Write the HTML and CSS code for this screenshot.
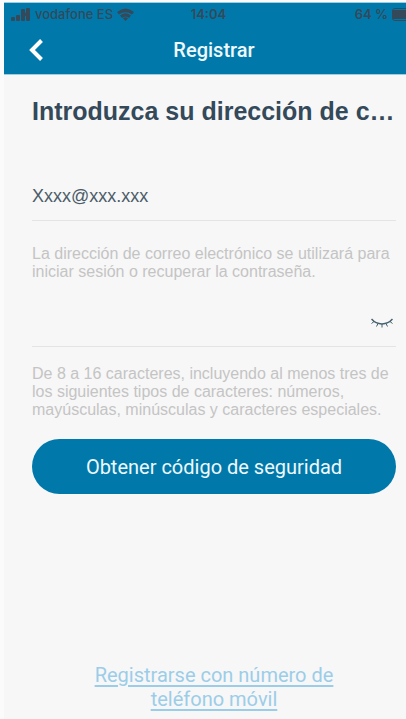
FILE: index.html
```html
<!DOCTYPE html>
<html lang="es">
<head>
<meta charset="utf-8">
<meta name="viewport" content="width=device-width, initial-scale=1">
<title>Registrar</title>
<link rel="stylesheet" href="styles.css">
</head>
<body>
<div class="screen">
  <header class="top">
    <div class="status">
      <div class="carrier">
        <svg class="signal" width="20" height="13" viewBox="0 0 20 13" aria-hidden="true"><rect x="0" y="9" width="4" height="4" rx="1"/><rect x="5" y="7" width="4" height="6" rx="1"/><rect x="10" y="1" width="4" height="12" rx="1"/><rect x="15" y="0" width="4" height="13" rx="1"/><path d="M12 3l6 8" stroke="#34495a" stroke-width="2"/></svg>
        <span>vodafone ES</span>
        <svg class="wifi" width="17" height="13" viewBox="0 0 17 13" aria-hidden="true"><path d="M0 4Q8.500-3 17 4L15 6.500Q8.500 2 2 6.500ZM3 7.500Q8.500 3 14 7.500L12 10Q8.500 7 5 10ZM6 10.500Q8.500 8 11 10.500L8.500 13Z"/></svg>
      </div>
      <span class="time">14:04</span>
      <div class="battery">
        <span>64 %</span>
        <svg width="14" height="13" viewBox="0 0 14 13" aria-hidden="true"><path d="M14 .5H3Q.5 .5 .5 3V10Q.5 12.500 3 12.500H14" fill="none" stroke="#34495a"/><rect x="1" y="2" width="13" height="9"/></svg>
      </div>
    </div>
    <nav class="bar">
      <button class="back" type="button" aria-label="Atrás"><svg width="16" height="24" viewBox="0 0 16 24" aria-hidden="true"><path d="M13.500 2.500L4 12L13.500 21.500" fill="none" stroke="#fff" stroke-width="4"/></svg></button>
      <span class="title">Registrar</span>
    </nav>
  </header>
  <main class="content">
    <h1>Introduzca su dirección de c…</h1>
    <form>
      <div class="field">
        <input type="email" value="Xxxx@xxx.xxx" aria-label="Correo electrónico" aria-describedby="mail-help">
      </div>
      <p class="help" id="mail-help">La dirección de correo electrónico se utilizará para iniciar sesión o recuperar la contraseña.</p>
      <div class="field">
        <input type="password" aria-label="Contraseña" aria-describedby="pass-help">
        <button class="eye" type="button" aria-label="Mostrar contraseña"><svg width="22" height="10" viewBox="0 0 22 10" fill="none" stroke="#45606f" aria-hidden="true"><path d="M.5 1C6 7.500 16 7.500 21.500 1" stroke-width="1.500"/><path d="M3 3.500L.5 5.500M7 5.500L5.500 8.500M11 6V9.500M15 5.500L16.500 8.500M19 3.500L21.500 5.500"/></svg></button>
      </div>
      <p class="help rules" id="pass-help">De 8 a 16 caracteres, incluyendo al menos tres de los siguientes tipos de caracteres: números, mayúsculas, minúsculas y caracteres especiales.</p>
      <button class="submit" type="submit">Obtener código de seguridad</button>
    </form>
    <a class="phone" href="#">Registrarse con número de teléfono móvil</a>
  </main>
</div>
</body>
</html>
```
FILE: styles.css
```css
* { box-sizing: border-box; }
body {
  margin: 0;
  background: #fbfbfb;
  color: #34495a;
  font-family: "Liberation Sans", Arial, sans-serif;
}
button { border: 0; padding: 0; background: none; cursor: pointer; }
svg { display: block; flex: none; }
.screen {
  display: flex;
  flex-direction: column;
  min-height: 100vh;
  padding: 2px 0 0 4px;
}
.top {
  background: #0079aa;
  border: 1px solid #9fcde0;
  border-width: 1px 0;
}
.status {
  display: grid;
  grid-template-columns: 1fr auto 1fr;
  align-items: center;
  height: 22px;
  padding-left: 7px;
  font-size: 13px;
  font-family: Inter, sans-serif;
  font-weight: 600;
}
.status svg { fill: #34495a; }
.carrier, .battery { display: flex; align-items: center; gap: 4px; }
.carrier { font-weight: 500; }
.battery { justify-content: flex-end; }
.bar {
  display: grid;
  grid-template-columns: 48px 1fr 48px;
  align-items: center;
  height: 49px;
  padding: 0 10px 0 24px;
}
.back { justify-self: start; }
.title {
  padding-left: 4px;
  color: #eef8fc;
  font: 500 20px Roboto, sans-serif;
  text-align: center;
}
.content {
  display: flex;
  flex: 1;
  flex-direction: column;
  padding: 20px 10px 8px 28px;
  background: #f7f7f7;
}
h1 {
  margin: 0 0 46px;
  font-size: 25px;
  line-height: 32px;
  white-space: nowrap;
}
.field {
  display: flex;
  align-items: center;
  height: 48px;
  border-bottom: 1px solid #e4e4e4;
}
.field input {
  flex: 1;
  min-width: 0;
  padding: 0;
  border: 0;
  outline: 0;
  background: none;
  color: #4b5c68;
  font: 18px "Liberation Sans", Arial, sans-serif;
}
.eye { padding: 0 3px; }
.help {
  margin: 24px 0 18px;
  color: #c4c4c4;
  font-size: 16px;
  line-height: 18px;
}
.rules { margin: 18px 0 20px; }
.submit {
  display: block;
  width: 100%;
  height: 55px;
  border-radius: 28px;
  background: #0079aa;
  color: #eef8fc;
  font: 20px Roboto, sans-serif;
}
.phone {
  align-self: center;
  max-width: 260px;
  margin-top: auto;
  color: #9ccde8;
  font: 20px/24px Roboto, sans-serif;
  text-align: center;
  text-underline-offset: 3px;
}
```
